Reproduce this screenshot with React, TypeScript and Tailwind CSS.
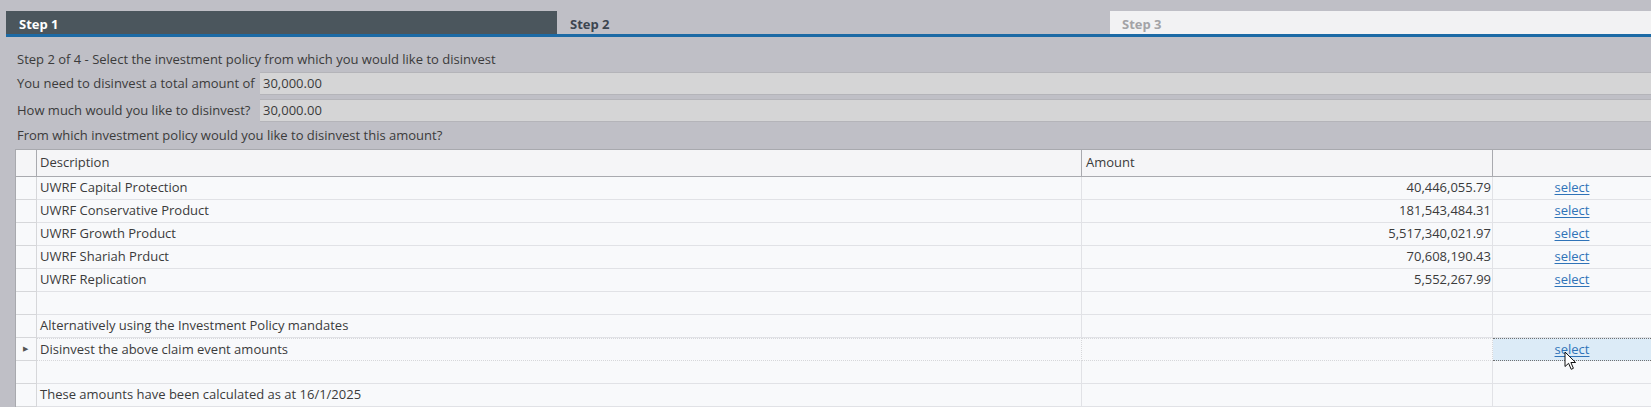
import React from 'react';

const policies = [
  { name: 'UWRF Capital Protection', amount: '40,446,055.79' },
  { name: 'UWRF Conservative Product', amount: '181,543,484.31' },
  { name: 'UWRF Growth Product', amount: '5,517,340,021.97' },
  { name: 'UWRF Shariah Prduct', amount: '70,608,190.43' },
  { name: 'UWRF Replication', amount: '5,552,267.99' },
];

function Cursor() {
  return (
    <svg className="absolute left-[1564px] top-[351px]" width="13" height="20" viewBox="0 0 13 20">
      <path
        d="M1 1 L1 15.5 L4.6 12.3 L7.2 18.3 L9.4 17.3 L6.9 11.5 L11.6 11.5 Z"
        fill="#fff"
        stroke="#111"
        strokeWidth="1"
        strokeLinejoin="round"
      />
    </svg>
  );
}

function Row({
  desc,
  amount,
  link,
  focused,
}: {
  desc?: string;
  amount?: string;
  link?: boolean;
  focused?: boolean;
}) {
  const line = focused
    ? 'border-y border-dotted border-[#707070]'
    : 'border-b border-[#e1e2e6]';
  return (
    <>
      <div className="h-[23px] border-r border-b border-[#d6d7da] bg-[#f8f9fb] flex items-center justify-center">
        {focused && <span className="text-[7px] text-[#555] ml-[-2px]">▶</span>}
      </div>
      <div className={`h-[23px] border-r border-[#d6d7da] ${line} px-[3px] flex items-center`}>
        {desc}
      </div>
      <div className={`h-[23px] border-r border-[#d6d7da] ${line} pl-[4px] pr-[1px] flex items-center justify-end`}>
        {amount}
      </div>
      <div
        className={`h-[23px] ${line} flex items-center justify-center ${
          focused ? 'bg-[#dcebf7]' : ''
        }`}
      >
        {link && <span className="text-[#2f73b8] underline underline-offset-2">select</span>}
      </div>
    </>
  );
}

export default function App() {
  return (
    <div className="relative w-[1651px] h-[407px] overflow-hidden bg-[#bfbfc6] text-[13px] text-[#3b3b3b] font-['Open_Sans',sans-serif]">
      <div className="flex pt-[11px] pl-[6px]">
        <div className="w-[551px] h-[26px] shrink-0 bg-[#4b565d] border-b-[3px] border-[#1c6aa5] pl-[13px] pt-[5px] flex items-center font-bold text-white">
          Step 1
        </div>
        <div className="w-[553px] h-[26px] shrink-0 border-b-[3px] border-[#1c6aa5] pl-[13px] pt-[5px] flex items-center font-bold text-[#3d4650]">
          Step 2
        </div>
        <div className="w-[552px] h-[26px] shrink-0 bg-[#f2f2f3] border-b-[3px] border-[#1c6aa5] pl-[12px] pt-[5px] flex items-center font-bold text-[#a3a3a6]">
          Step 3
        </div>
      </div>

      <div className="pl-[17px]">
        <div className="mt-[11px] h-[24px] flex items-center">
          Step 2 of 4 - Select the investment policy from which you would like to disinvest
        </div>
        <div className="h-[23px] flex items-center">
          <span className="w-[243px] shrink-0">You need to disinvest a total amount of</span>
          <div className="flex-1 h-full bg-[#d5d5d6] border-y border-[#b4b4b9] pl-[3px] flex items-center">
            30,000.00
          </div>
        </div>
        <div className="mt-[4px] h-[23px] flex items-center">
          <span className="w-[243px] shrink-0">How much would you like to disinvest?</span>
          <div className="flex-1 h-full bg-[#d5d5d6] border-y border-[#b4b4b9] pl-[3px] flex items-center">
            30,000.00
          </div>
        </div>
        <div className="h-[27px] flex items-center">
          From which investment policy would you like to disinvest this amount?
        </div>
      </div>

      <div className="ml-[15px] grid grid-cols-[21px_1045px_411px_1fr] border-l border-t border-[#a8a9ae] bg-[#f8f9fb]">
        <div className="h-[27px] border-r border-b border-[#a9aaaf] bg-[#f5f5f7]" />
        <div className="h-[27px] border-r border-b border-[#a9aaaf] bg-[#f5f5f7] px-[3px] flex items-center">
          Description
        </div>
        <div className="h-[27px] border-r border-b border-[#a9aaaf] bg-[#f5f5f7] px-[4px] flex items-center">
          Amount
        </div>
        <div className="h-[27px] border-b border-[#a9aaaf] bg-[#f5f5f7]" />

        {policies.map((p) => (
          <Row key={p.name} desc={p.name} amount={p.amount} link />
        ))}
        <Row />
        <Row desc="Alternatively using the Investment Policy mandates" />
        <Row desc="Disinvest the above claim event amounts" link focused />
        <Row />
        <Row desc="These amounts have been calculated as at 16/1/2025" />
      </div>

      <Cursor />
    </div>
  );
}
